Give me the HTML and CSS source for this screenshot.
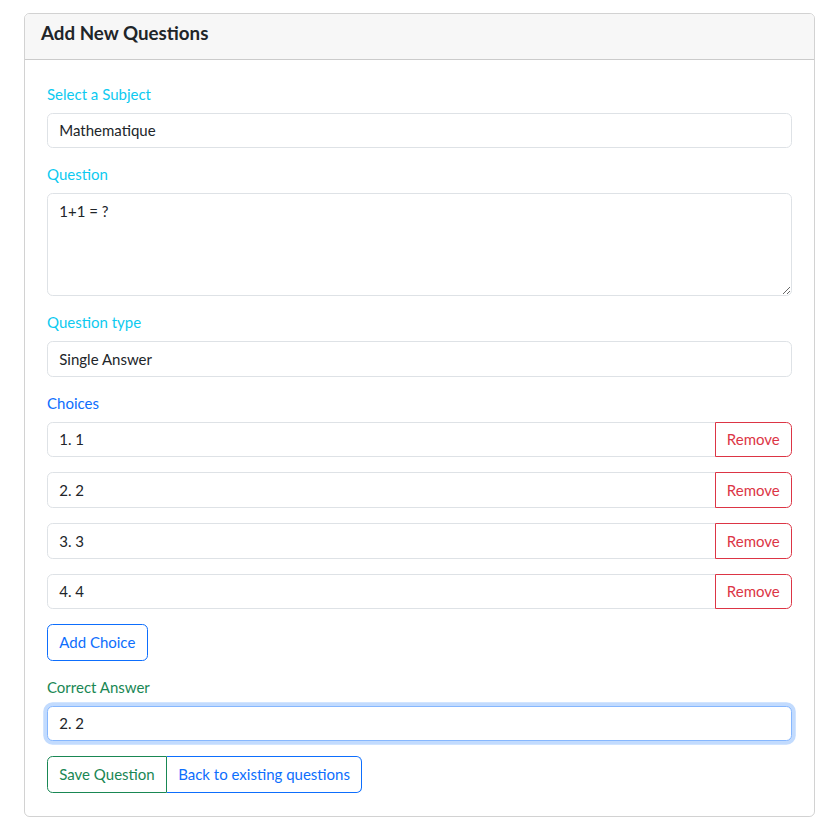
FILE: index.html
```html
<!DOCTYPE html>
<html>
<head>
<meta charset="utf-8">
<link rel="stylesheet" href="styles.css">
</head>
<body>
<div class="page">
  <div class="card">
    <div class="card-header">
      <h5 class="card-title">Add New Questions</h5>
    </div>
    <div class="card-body">
      <div class="field">
        <label class="label label-info">Select a Subject</label>
        <div class="control">Mathematique</div>
      </div>
      <div class="field">
        <label class="label label-info">Question</label>
        <textarea class="control textarea" rows="4">1+1 = ?</textarea>
      </div>
      <div class="field">
        <label class="label label-info">Question type</label>
        <div class="control">Single Answer</div>
      </div>
      <div class="field">
        <label class="label label-primary">Choices</label>
        <div class="input-group">
          <div class="control grouped">1. 1</div>
          <button class="btn btn-danger-outline btn-end">Remove</button>
        </div>
      </div>
      <div class="field">
        <div class="input-group">
          <div class="control grouped">2. 2</div>
          <button class="btn btn-danger-outline btn-end">Remove</button>
        </div>
      </div>
      <div class="field">
        <div class="input-group">
          <div class="control grouped">3. 3</div>
          <button class="btn btn-danger-outline btn-end">Remove</button>
        </div>
      </div>
      <div class="field">
        <div class="input-group">
          <div class="control grouped">4. 4</div>
          <button class="btn btn-danger-outline btn-end">Remove</button>
        </div>
      </div>
      <div class="field">
        <button class="btn btn-primary-outline btn-solo">Add Choice</button>
      </div>
      <div class="field">
        <label class="label label-success">Correct Answer</label>
        <div class="control focused">2. 2</div>
      </div>
      <div class="btn-group">
        <button class="btn btn-success-outline btn-first btn-solo">Save Question</button>
        <button class="btn btn-primary-outline btn-last btn-solo">Back to existing questions</button>
      </div>
    </div>
  </div>
</div>
</body>
</html>
```

FILE: styles.css
```css
* { box-sizing: border-box; }
html, body { margin: 0; padding: 0; background: #fff; }
body {
  font-family: "Lato", "Noto Sans", sans-serif;
  font-size: 15px;
  line-height: 22.5px;
  color: #212529;
}
.page {
  padding: 13px 8px 0 24px;
}
.card {
  border: 1px solid rgba(0,0,0,.175);
  border-radius: 5.6px;
  overflow: hidden;
}
.card-header {
  background: #f7f7f7;
  border-bottom: 1px solid rgba(0,0,0,.175);
  padding: 7.5px 16px 15px 16px;
}
.card-title {
  margin: 0;
  font-size: 18.75px;
  line-height: 22.5px;
  font-weight: 700;
  color: #212529;
}
.card-body {
  padding: 22.5px 22px 23px 22px;
}
.field {
  margin-bottom: 15px;
}
.label {
  display: block;
  margin-bottom: 7.5px;
}
.label-info { color: #0dcaf0; }
.label-primary { color: #0d6efd; }
.label-success { color: #198754; }
.control {
  display: block;
  width: 100%;
  height: 35.6px;
  padding: 5.6px 11.25px;
  border: 1px solid #dee2e6;
  border-radius: 5.6px;
  background: #fff;
  font: inherit;
  color: #212529;
}
.textarea {
  height: 103.2px;
  resize: vertical;
  outline: none;
}
.control.focused {
  border-color: #86b7fe;
  box-shadow: 0 0 0 3.75px rgba(13,110,253,.25);
}
.input-group {
  display: flex;
}
.control.grouped {
  flex: 1;
  border-top-right-radius: 0;
  border-bottom-right-radius: 0;
}
.btn {
  display: inline-block;
  height: 35.6px;
  padding: 5.6px 11.25px;
  font: inherit;
  background: #fff;
  border: 1px solid;
  border-radius: 5.6px;
  cursor: pointer;
}
.btn-solo {
  height: 36.4px;
}
.btn-end {
  margin-left: -1px;
  border-top-left-radius: 0;
  border-bottom-left-radius: 0;
}
.btn-danger-outline { color: #dc3545; border-color: #dc3545; }
.btn-primary-outline { color: #0d6efd; border-color: #0d6efd; }
.btn-success-outline { color: #198754; border-color: #198754; }
.btn-group {
  display: flex;
}
.btn-first {
  border-top-right-radius: 0;
  border-bottom-right-radius: 0;
}
.btn-last {
  border-left: none;
  border-top-left-radius: 0;
  border-bottom-left-radius: 0;
}
```
